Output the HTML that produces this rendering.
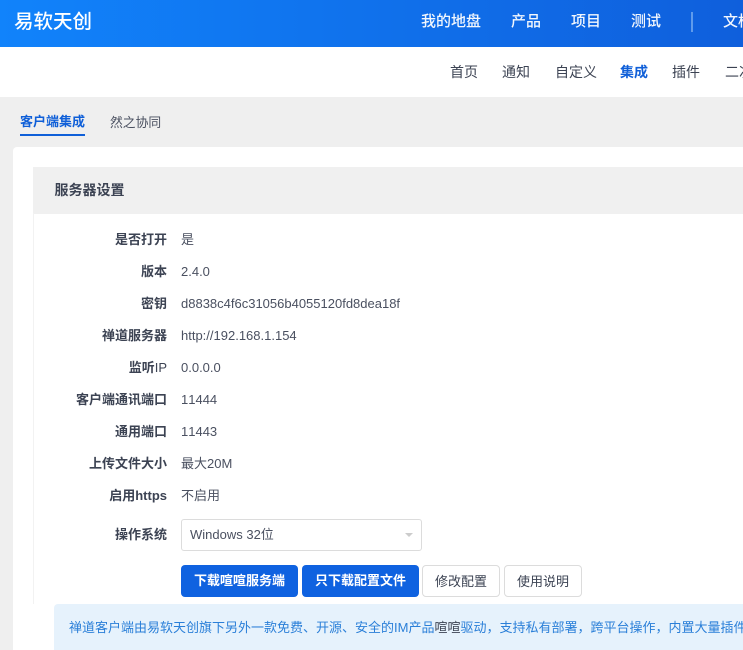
<!DOCTYPE html>
<html lang="zh"><head><meta charset="utf-8"><title>集成</title>
<style>
html,body{margin:0;padding:0}
body{width:743px;height:650px;overflow:hidden;position:relative;background:#efefef;color:#3c4353;font:13px/20px "Liberation Sans","Noto Sans CJK SC",sans-serif;font-kerning:none}
.a{position:absolute;white-space:nowrap}
#hd{left:0;top:0;width:743px;height:47px;background:linear-gradient(90deg,#1183fb,#0f5fdc)}
#sub{left:0;top:47px;width:743px;height:50px;background:#fff}
.n{color:#fff;font-size:15px;top:12px;line-height:20px;font-weight:500;opacity:.95}
.s{color:#3c4353;font-size:14px;top:62px;line-height:20px}
.clip{overflow:hidden}
#card{left:13px;top:147px;width:730px;height:503px;background:#fff;border-radius:4px 0 0 0}
#ph{left:33px;top:167px;width:710px;height:46px;background:#f0f0f0;border-bottom:1px solid #f0f0f0}
#pl{left:33px;top:213px;width:1px;height:391px;background:#f2f2f2}
.l{left:30px;width:137px;text-align:right;font-weight:700;color:#3c4353}
.v{left:181px;color:#4a5060}
.b{top:565px;height:32px;line-height:31px;border-radius:4px;text-align:center;box-sizing:border-box;font-size:13px}
.p{background:#0f62e0;color:#fff;font-weight:700}
.d{background:#fff;border:1px solid #dcdcdc;color:#3c4353}
</style></head><body>
<div class="a" id="hd"></div>
<div class="a" style="left:14px;top:8px;font-size:19.5px;line-height:28px;color:#fff;font-weight:500">易软天创</div>
<div class="a n" style="left:421px">我的地盘</div>
<div class="a n" style="left:511px">产品</div>
<div class="a n" style="left:571px">项目</div>
<div class="a n" style="left:631px">测试</div>
<div class="a" style="left:691px;top:12px;width:2px;height:20px;background:#5f9bec"></div>
<div class="a n clip" style="left:723px;width:20px">文档</div>
<div class="a" id="sub"></div>
<div class="a s" style="left:450px">首页</div>
<div class="a s" style="left:502px">通知</div>
<div class="a s" style="left:555px">自定义</div>
<div class="a s" style="left:620px;color:#0f5fd8;font-weight:700">集成</div>
<div class="a s" style="left:672px">插件</div>
<div class="a s clip" style="left:725px;width:18px">二次开发</div>
<div class="a" style="left:20px;top:112px;color:#0f5fd8;font-weight:700">客户端集成</div>
<div class="a" style="left:20px;top:134px;width:65px;height:2px;background:#0f5fd8"></div>
<div class="a" style="left:110px;top:113px;color:#4a5060;font-size:12.8px">然之协同</div>
<div class="a" id="card"></div>
<div class="a" id="ph"></div>
<div class="a" id="pl"></div>
<div class="a" style="left:54.5px;top:180px;font-weight:700;font-size:14px;color:#3c4353">服务器设置</div>
<div class="a l" style="top:230px">是否打开</div><div class="a v" style="top:230px">是</div>
<div class="a l" style="top:262px">版本</div><div class="a v" style="top:262px">2.4.0</div>
<div class="a l" style="top:294px">密钥</div><div class="a v" style="top:294px">d8838c4f6c31056b4055120fd8dea18f</div>
<div class="a l" style="top:326px">禅道服务器</div><div class="a v" style="top:326px">http://192.168.1.154</div>
<div class="a l" style="top:358px">监听<span style="font-weight:400">IP</span></div><div class="a v" style="top:358px">0.0.0.0</div>
<div class="a l" style="top:390px">客户端通讯端口</div><div class="a v" style="top:390px">11444</div>
<div class="a l" style="top:422px">通用端口</div><div class="a v" style="top:422px">11443</div>
<div class="a l" style="top:454px">上传文件大小</div><div class="a v" style="top:454px">最大20M</div>
<div class="a l" style="top:486px">启用https</div><div class="a v" style="top:486px">不启用</div>
<div class="a l" style="top:525px">操作系统</div>
<div class="a" style="left:181px;top:519px;width:241px;height:32px;box-sizing:border-box;border:1px solid #dcdcdc;border-radius:3px;background:#fff;padding-left:8px;line-height:30px;color:#4a5060">Windows 32位</div>
<div class="a" style="left:405px;top:533px;width:0;height:0;border-left:4px solid transparent;border-right:4px solid transparent;border-top:4px solid #ccc"></div>
<div class="a b p" style="left:181px;width:117px">下载喧喧服务端</div>
<div class="a b p" style="left:302px;width:117px">只下载配置文件</div>
<div class="a b d" style="left:422px;width:78px">修改配置</div>
<div class="a b d" style="left:504px;width:78px">使用说明</div>
<div class="a" style="left:54px;top:604px;width:689px;height:46px;background:#e6f2fc;border-radius:4px 0 0 0"></div>
<div class="a clip" style="left:69px;top:618px;width:674px;color:#2a7fd8">禅道客户端由易软天创旗下另外一款免费、开源、安全的IM产品<span style="color:#3c4353">喧喧</span>驱动，支持私有部署，跨平台操作，内置大量插件</div>
</body></html>
